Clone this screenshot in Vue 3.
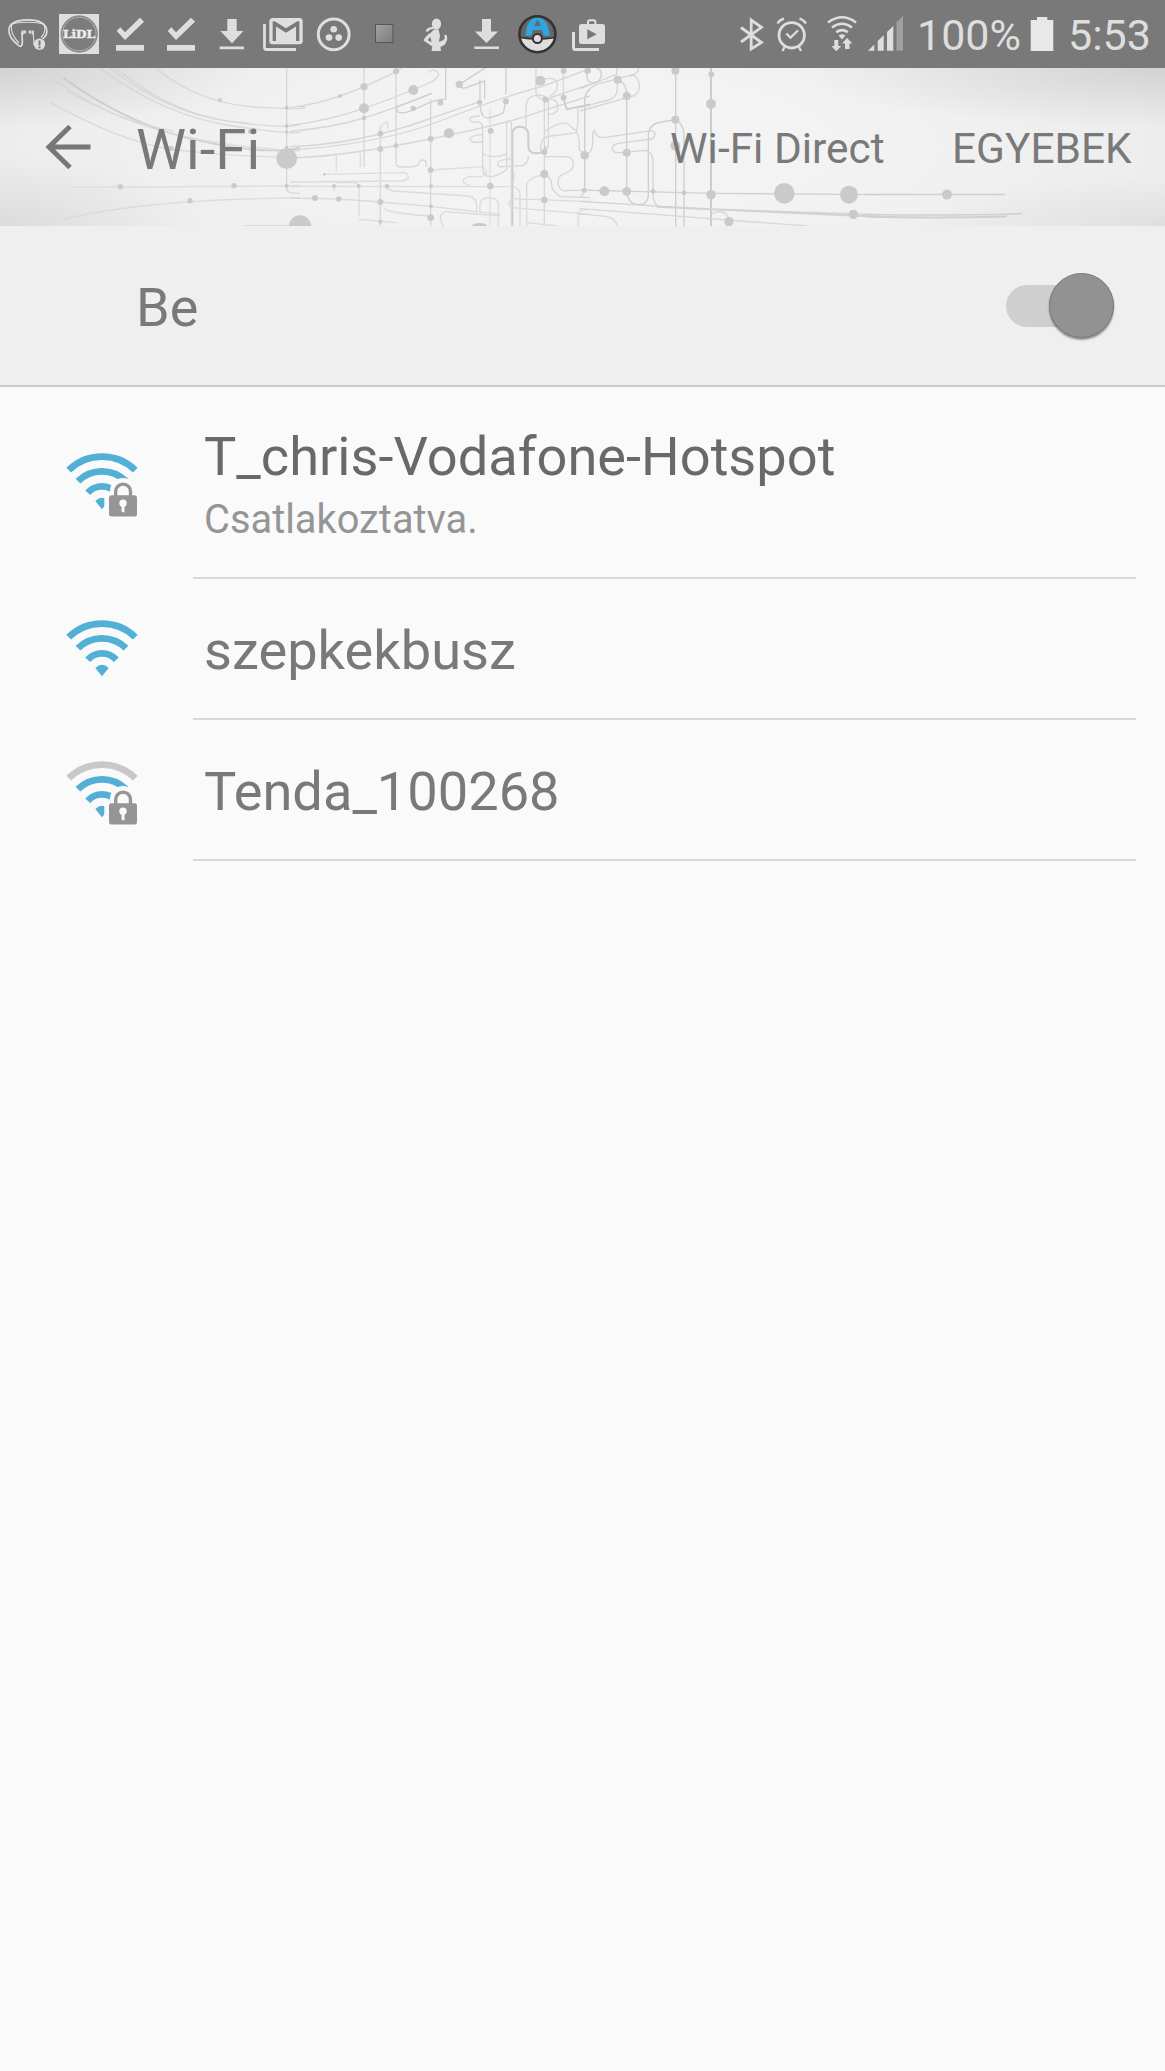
<script setup>
const networks = [
  { name: 'T_chris-Vodafone-Hotspot', status: 'Csatlakoztatva.', secured: true, level: 4 },
  { name: 'szepkekbusz', secured: false, level: 4 },
  { name: 'Tenda_100268', secured: true, level: 3 },
]
</script>

<template>
  <div class="screen">
    <div class="statusbar">
      <div class="notifications">
        <svg width="54" height="68" viewBox="0 0 54 68" fill="none" stroke="#dedede">
          <path d="M14 22.500C20 19 36 19 41 22.500C49 27 48 35 42.500 39M14 22.500C5 27 9 38 17.500 44.500C21 48 22.500 46 22.300 41L22 32" stroke-width="1.700" />
          <path d="M11.500 24.500C17 21.500 38 21.500 44 24.500C46 30 44 34.500 41 37.500M11.500 24.500C10.500 31 14 38 19 43M33.300 33L34 45" stroke-width="1.100" />
          <path d="M22.600 30.500v4M25 30.500v3M29.800 30.500v3M32.600 30.500v4" stroke-width="2.200" />
          <circle cx="39.500" cy="44.300" r="5.700" fill="#dedede" stroke="none" />
          <path d="M39.500 40.500v5M39.500 46.500v2" stroke="#777" stroke-width="2" />
        </svg>
        <svg width="51" height="68" viewBox="54 0 51 68">
          <path d="M59 14h40v40H59z" fill="#dedede" />
          <circle cx="79.200" cy="34" r="18.200" fill="#7c7c7c" stroke="#8a8a8a" stroke-width=".8" />
          <circle cx="79.200" cy="34" r="16.800" fill="none" stroke="#c4c4c4" stroke-width=".7" />
          <text x="63" y="38" class="logo" textLength="32" lengthAdjust="spacingAndGlyphs">LiDL</text>
        </svg>
        <svg v-for="n in 2" :key="n" width="51" height="68" viewBox="105 0 51 68" fill="#dedede">
          <path d="M116.700 31l3.600-3.700 4.700 5 15-14.600 4 4L125 40zM116 45h28v5.700h-28z" />
        </svg>
        <svg width="48" height="68" viewBox="207 0 48 68" fill="#dedede">
          <path d="M227.300 19h9.400v12h6.800L232 43.300 220.300 31h7zM219.700 46.600H244v2.600h-24.300z" />
        </svg>
        <svg width="53" height="68" viewBox="255 0 53 68">
          <path d="M264.500 24v23.500q0 2 2 2H296" fill="none" stroke="#dedede" stroke-width="2.800" />
          <path transform="translate(265.960 11.440) scale(1.670 1.640)" d="M20 18h-2V9.250L12 13 6 9.250V18H4V6h1.200l6.800 4.250L18.800 6H20m0-2H4c-1.110 0-2 .89-2 2v12a2 2 0 0 0 2 2h16a2 2 0 0 0 2-2V6a2 2 0 0 0-2-2z" fill="#dedede" />
        </svg>
        <svg width="52" height="68" viewBox="308 0 52 68" fill="#dedede">
          <circle cx="333.700" cy="34.300" r="15.400" fill="none" stroke="#dedede" stroke-width="3" />
          <circle cx="333.700" cy="29.300" r="3.300" /><circle cx="329" cy="37.600" r="3.300" /><circle cx="338.700" cy="37.600" r="3.300" />
        </svg>
        <svg width="50" height="68" viewBox="360 0 50 68">
          <defs><linearGradient id="stop" x2="1" y2="1"><stop stop-color="#a2a2a2" /><stop offset="1" stop-color="#7d7d7d" /></linearGradient></defs>
          <rect x="375.500" y="24.500" width="17.500" height="18" fill="url(#stop)" stroke="#555" />
        </svg>
        <svg width="50" height="68" viewBox="410 0 50 68" fill="#dedede">
          <ellipse cx="436.500" cy="24" rx="4.600" ry="5.600" />
          <path d="M425.500 31q2-4.500 8-4v2q-4 0-6 3zM430.500 33l3.500-3.500h4.500l1.500 6-1 6.500 4.500-2 1.500-2.500-1-2q2-1.500 3 .5l.2 3.500-2.200 5-4.500 2.500.5 4h-9.500l.8-4.500-8.800-6q2-5 7-7.500zM430.500 37l-3 3 4 2.300z" fill-rule="evenodd" />
        </svg>
        <svg width="52" height="68" viewBox="460 0 52 68" fill="#dedede">
          <path d="M482 19h9v12.500h7L486.500 43 475 31.500h7zM474.300 46.500H499v2.600h-24.700z" />
        </svg>
        <svg width="51" height="68" viewBox="512 0 51 68">
          <circle cx="537.400" cy="34.200" r="18" fill="#666" />
          <path d="M520 37.500q17.500 3 35 0A18 18 0 0 1 520 37.500z" fill="#dedede" />
          <path d="M525.500 36C526 25 530 17.500 537.500 17.500S549 25 549.700 36L543.500 35.500 542 30H533l-1.500 5.500z" fill="#30a4e0" />
          <path d="M537.500 19.500l3.500 6.500h-7z" fill="#666" />
          <circle cx="537.400" cy="34.200" r="18" fill="none" stroke="#333" stroke-width="2.600" />
          <path d="M520 37.500q17.500 3 35 0" fill="none" stroke="#333" stroke-width="1.500" />
          <circle cx="537.400" cy="38.500" r="4.500" fill="#dedede" stroke="#333" stroke-width="2" />
        </svg>
        <svg width="52" height="68" viewBox="563 0 52 68">
          <path d="M573.500 32v15.500q0 2 2 2H599" fill="none" stroke="#dedede" stroke-width="3" />
          <path d="M588 24v-2q0-1.700 1.700-1.700h4q1.700 0 1.700 1.700v2" fill="none" stroke="#dedede" stroke-width="2" />
          <rect x="579" y="24" width="26" height="20" rx="2.500" fill="#dedede" />
          <path d="M587.300 29.300v10l9.400-5z" fill="#777" />
        </svg>
      </div>

      <div class="system">
        <svg width="35" height="68" viewBox="735 0 35 68" fill="none" stroke="#dedede" stroke-width="2.800">
          <path d="M741 27.500l20.500 15L751.200 49V20l10.300 7.300-20.500 14.700" />
        </svg>
        <svg width="45" height="68" viewBox="770 0 45 68" fill="none" stroke="#dedede" stroke-width="2.800">
          <circle cx="791.700" cy="35.300" r="12.700" />
          <path d="M786.300 33.500l4.200 4.200 7.500-7.200M777.500 23.500q2-3.500 6.500-4.800M799.500 18.700q4 1 6.500 4.800M784.500 47l-2 4M799 47l2 4" stroke-width="2.300" />
        </svg>
        <svg width="47" height="68" viewBox="815 0 47 68" fill="none" stroke="#dedede" stroke-width="2.600">
          <path d="M828 22.500q14-10.500 28 0M832 27.500q10-7.500 20 0M836.200 32.300q5.800-4.300 11.600 0" />
          <path d="M838.600 35.600q3.400-2.500 6.800 0l-3.400 4zM834.300 40h4v6h3l-5 5.300-5-5.300h3zM845 49v-5.500h-3l5-5.500 5.500 5.500h-3V49z" fill="#dedede" stroke="none" />
        </svg>
        <svg width="50" height="68" viewBox="862 0 50 68" fill="#dedede">
          <path d="M868 50.700l6.300-6.300v6.300zM877.700 50.700v-9.700l6-5.700v15.400zM887 50.700V32l6.300-6v24.700z" />
          <path d="M896.500 50.700V22.500l6.500-6.500v34.700z" fill="#a0a0a0" />
        </svg>
        <span class="percent">100%</span>
        <svg width="34" height="68" viewBox="1027 0 34 68" fill="#e8e8e8">
          <path d="M1030.700 20h6.300v-3h10.300v3h6v31h-22.600z" />
        </svg>
        <span class="clock">5:53</span>
      </div>
    </div>

    <header class="appbar">
      <svg class="pattern" width="1165" height="158" viewBox="0 68 1165 158" fill="none" stroke="#cecece">
        <!-- left third -->
        <g transform="translate(0 66) scale(.33333)" stroke-width="4" opacity=".75">
          <path d="M190 36Q390 180 600 225T900 244" stroke="#c4c4c4" stroke-width="5" />
          <path d="M163 43C300 130 450 230 900 255M200 75Q360 165 520 195M152 110Q360 225 500 247T900 275" stroke="#d4d4d4" />
          <path d="M300 6Q490 150 700 180T900 196M330 6Q500 140 680 165T900 176M347 6Q530 160 750 172M470 8Q600 115 780 124T900 120" stroke="#d2d2d2" />
          <path d="M860 0V370q3 14 40 12" />
          <path d="M222 364L900 360M185 462Q420 400 900 396M730 479H900" stroke="#d8d8d8" />
        </g>
        <g transform="translate(0 66) scale(.33333)" fill="#cacaca" stroke="none">
          <circle cx="860" cy="278" r="31" /><circle cx="900" cy="482" r="34" />
          <circle cx="660" cy="102" r="6" /><circle cx="860" cy="125" r="6" /><circle cx="860" cy="180" r="6" /><circle cx="860" cy="198" r="5" /><circle cx="860" cy="245" r="6" />
          <circle cx="361" cy="362" r="8" /><circle cx="702" cy="359" r="8" /><circle cx="860" cy="360" r="6" /><circle cx="570" cy="404" r="8" /><circle cx="513" cy="247" r="8" /><circle cx="750" cy="197" r="7" />
        </g>
        <!-- middle third -->
        <g transform="translate(290 66) scale(.33333)" stroke-width="4" opacity=".75">
          <path d="M0 124Q100 115 222 62T330 6M0 178Q110 165 222 127T430 45Q455 25 440 16T415 20M0 196Q130 185 222 156T425 82" />
          <path d="M0 242Q200 235 400 165T570 108M0 252Q270 235 450 165T760 60L900 8M20 275Q170 270 420 219T740 140L900 90M760 102L900 55" />
          <path d="M222 0V303M271 180V480M318 0V290Q318 303 335 303H360Q385 303 388 290T408 285V303M422 100V480M763 90V480M820 0V95M884 100V370M885 100Q885 80 900 70" />
          <path d="M600 130V480" stroke="#dadada" />
          <path d="M667 480V205Q667 182 690 182T715 205V240Q715 262 740 262T767 240" stroke="#bfbfbf" stroke-width="6" />
          <path d="M467 6V100H450Q425 105 380 127Q330 150 322 135T350 112L425 82M508 55L585 6M508 55Q515 75 540 60L584 45V100M570 42V108Q570 135 580 150T640 140L648 106M648 0V85" stroke="#c2c2c2" />
          <path d="M570 150Q540 150 540 160T560 168Q578 165 578 190V310Q580 330 600 332T650 310V170Q655 160 664 170V480M578 205Q540 208 540 220T578 228M578 262Q590 272 610 272T650 265M667 278Q625 280 623 292T640 302L700 298Q715 290 715 270" />
          <path d="M708 190V120Q710 90 740 88T775 105V240Q770 260 750 262M738 6V80Q740 100 766 101M760 40Q800 30 802 55T780 90M770 100Q800 95 803 120T775 145M766 195Q820 160 835 175T860 195L864 170V125M752 260V240Q755 212 780 210T860 200Q868 205 868 250L884 268M763 272H830Q850 275 850 295T825 322Q800 330 805 355T835 373H884M763 323Q785 335 785 355T810 392L900 395" />
          <path d="M820 95L830 130 900 115" stroke="#bfbfbf" stroke-width="5" />
          <path d="M100 325L340 320Q355 322 355 332T335 345L0 348M0 361L660 362Q675 350 672 315M139 317V265M211 303V262M132 378V360M135 350H195Q207 350 207 370V450M293 190V170Q285 165 271 185M422 312L580 302Q600 325 575 332H540Q520 335 520 345T540 358" stroke="#d6d6d6" />
          <path d="M0 396L145 399 271 408 422 421 630 445M285 425Q280 440 420 450M291 361Q290 370 310 375L535 390Q560 395 560 420V440M570 440V415Q572 395 598 395T625 415V480M460 480Q440 450 465 437L630 450M710 480V355Q715 335 763 325M667 362Q690 365 690 385V480M667 425Q645 410 672 398L900 407M667 425L900 445M710 470L800 480M865 480V440Q868 430 900 430M207 460L320 470" stroke="#d4d4d4" />
        </g>
        <g transform="translate(290 66) scale(.33333)" fill="#cacaca" stroke="none">
          <circle cx="222" cy="62" r="11" /><circle cx="222" cy="127" r="15" /><circle cx="222" cy="156" r="7" /><circle cx="150" cy="90" r="6" /><circle cx="318" cy="16" r="9" /><circle cx="370" cy="72" r="15" /><circle cx="370" cy="127" r="8" /><circle cx="451" cy="110" r="9" />
          <circle cx="508" cy="55" r="11" /><circle cx="569" cy="109" r="8" /><circle cx="648" cy="106" r="9" /><circle cx="751" cy="44" r="15" /><circle cx="766" cy="101" r="9" /><circle cx="821" cy="95" r="9" /><circle cx="821" cy="14" r="9" /><circle cx="894" cy="14" r="9" />
          <circle cx="271" cy="203" r="9" /><circle cx="271" cy="249" r="9" /><circle cx="318" cy="239" r="7" /><circle cx="422" cy="219" r="9" /><circle cx="477" cy="202" r="15" /><circle cx="602" cy="195" r="9" /><circle cx="422" cy="312" r="9" /><circle cx="763" cy="258" r="9" /><circle cx="884" cy="268" r="12" /><circle cx="763" cy="324" r="12" /><circle cx="763" cy="402" r="10" /><circle cx="883" cy="373" r="7" />
          <circle cx="132" cy="360" r="6" /><circle cx="206" cy="360" r="6" /><circle cx="291" cy="361" r="7" /><circle cx="423" cy="360" r="6" /><circle cx="601" cy="360" r="10" /><circle cx="75" cy="396" r="9" /><circle cx="146" cy="399" r="8" /><circle cx="271" cy="408" r="9" /><circle cx="423" cy="421" r="6" /><circle cx="422" cy="455" r="10" /><circle cx="271" cy="467" r="6" /><ellipse cx="568" cy="482" rx="24" ry="11" /><circle cx="103" cy="325" r="4" />
        </g>
        <!-- right third -->
        <g transform="translate(580 66) scale(.33333)" stroke-width="4">
          <path d="M14 360V95Q20 70 50 55L160 25Q178 18 175 6M0 68L110 25V6M0 125L85 102Q115 95 112 60V40M0 135L165 88Q185 70 175 45T150 32" opacity=".8" />
          <path d="M22 14Q15 45 35 50T64 30Q65 10 50 6M113 41Q140 50 140 90V376Q145 415 175 416T205 385V205Q208 172 245 168L286 161Q312 175 312 210V480M287 0V480" />
          <path d="M14 268Q38 260 38 230V205Q42 185 46 200T70 215L200 196Q226 190 225 205T205 220L115 232Q97 235 97 248T120 260L195 253Q219 255 219 290V380Q218 415 240 424" stroke="#d4d4d4" />
          <path d="M393 0V480" stroke="#c4c4c4" stroke-width="5" />
          <path d="M0 372L394 382L900 386M0 406L390 430L900 446" stroke="#d2d2d2" /><path d="M230 422L900 452" stroke="#d2d2d2" stroke-width="6" />
          <path d="M0 428L680 480M0 443L80 452Q105 455 112 480M394 445Q405 435 425 438T447 467M0 390Q14 385 12 373" stroke="#d8d8d8" />
        </g>
        <g transform="translate(580 66) scale(.33333)" fill="#cacaca" stroke="none">
          <circle cx="22" cy="14" r="9" /><circle cx="286" cy="14" r="12" /><circle cx="394" cy="25" r="9" /><circle cx="113" cy="41" r="12" /><circle cx="140" cy="90" r="12" /><circle cx="393" cy="114" r="15" /><circle cx="286" cy="161" r="12" /><circle cx="286" cy="239" r="15" /><circle cx="14" cy="268" r="12" /><circle cx="140" cy="260" r="12" />
          <circle cx="12" cy="373" r="7" /><circle cx="73" cy="376" r="15" /><circle cx="140" cy="376" r="13" /><circle cx="219" cy="376" r="7" /><circle cx="312" cy="380" r="7" /><circle cx="393" cy="386" r="14" /><circle cx="613" cy="382" r="31" /><circle cx="807" cy="386" r="27" /><circle cx="820" cy="445" r="14" /><circle cx="447" cy="467" r="14" />
        </g>
        <g stroke="#cfcfcf" stroke-width="1.500">
          <path d="M865 194.500H1005M865 214.500Q950 216 1022 213.500" /><path d="M865 216.500Q930 218.500 1007 216.500" stroke-width="2" />
          <circle cx="947" cy="194.600" r="5" fill="#cacaca" stroke="none" />
        </g>
      </svg>
      <svg class="back" width="46" height="46" viewBox="0 0 46 46" fill="none" stroke="#777" stroke-width="5">
        <path d="M45.500 23H4M25 2.500L4 23l21 20.500" />
      </svg>
      <h1>Wi-Fi</h1>
      <span class="action direct">Wi-Fi Direct</span>
      <span class="action">EGYEBEK</span>
    </header>

    <div class="master">
      <span>Be</span>
      <div class="switch"><div class="thumb"></div></div>
    </div>

    <main>
      <div v-for="net in networks" :key="net.name" class="network" :class="{ connected: net.status }">
        <svg class="signal" width="74" height="68" viewBox="-37 -58 74 68">
          <g fill="none" stroke="#52afd5" stroke-width="6.700">
            <path d="M-33.300-39.800A47.800 47.800 0 0 1 33.300-39.800" :stroke="net.level < 4 ? '#c8c8c8' : '#52afd5'" />
            <path d="M-24-28.800A34 34 0 0 1 24-28.800M-14.300-17.300A19.200 19.200 0 0 1 14.300-17.300" />
          </g>
          <path d="M-6.700-9Q0-15.500 6.700-9L0-.7z" fill="#52afd5" />
          <g v-if="net.secured">
            <path d="M2.300 9V-15L8-18.500V-19a13 13 0 0 1 26 0V9z" fill="#fafafa" />
            <path d="M13.700-14V-18.500a7.400 7.400 0 0 1 14.800 0V-14" fill="none" stroke="#959595" stroke-width="3.300" />
            <rect x="7" y="-14.700" width="28" height="21.300" rx="2.500" fill="#959595" />
            <circle cx="21" cy="-6.700" r="3.700" fill="#fafafa" />
            <path d="M19.600-6h2.900V2.200h-2.900z" fill="#fafafa" />
          </g>
        </svg>
        <div class="label">
          <div class="name">{{ net.name }}</div>
          <div v-if="net.status" class="state">{{ net.status }}</div>
        </div>
      </div>
    </main>
  </div>
</template>

<style>
body {
  background: #fafafa;
}
</style>

<style scoped>
.screen {
  width: 1165px;
  height: 2071px;
  overflow: hidden;
  background: #fafafa;
  font-family: Roboto, sans-serif;
  color: #797979;
}
svg {
  display: block;
  flex: none;
}
.statusbar {
  display: flex;
  justify-content: space-between;
  height: 68px;
  background: #797979;
}
.notifications,
.system {
  display: flex;
}
.logo {
  font: bold 11px 'DejaVu Serif', serif;
  fill: #ececec;
  stroke: #ececec;
  stroke-width: 0.5px;
}
.system {
  width: 430px;
  font-size: 43px;
  line-height: 68px;
  color: #dedede;
}
.percent {
  width: 115px;
  padding-left: 5px;
  box-sizing: border-box;
  margin-top: 1px;
}
.clock {
  padding-left: 7px;
  margin-top: 1px;
}
.appbar {
  position: relative;
  display: flex;
  height: 158px;
  background:
    radial-gradient(ellipse 260px 60px at 0 0, #0000001c, transparent),
    radial-gradient(ellipse 200px 70px at 0 100%, #00000012, transparent),
    radial-gradient(ellipse 380px 60px at 100% 0, #0000001c, transparent),
    radial-gradient(ellipse 260px 50px at 100% 100%, #0000000e, transparent),
    radial-gradient(ellipse 750px 220px at 50% 50%, #f3f3f3 30%, #eaeaea);
}
.pattern {
  position: absolute;
  inset: 0;
}
.back {
  position: relative;
  margin: 56px 0 0 45px;
}
h1 {
  position: relative;
  width: 535px;
  margin: 49px 0 0 45px;
  font-size: 56.400px;
  font-weight: 400;
  line-height: 66px;
}
.action {
  position: relative;
  margin-top: 51px;
  font-size: 42.400px;
  line-height: 60px;
  white-space: nowrap;
}
.direct {
  width: 282px;
  margin-left: -1px;
}
.master {
  display: flex;
  justify-content: space-between;
  box-sizing: border-box;
  height: 161px;
  padding: 51px 51px 0 136px;
  border-bottom: 2px solid #cacaca;
  background: #efefef;
  font-size: 54px;
  line-height: 62px;
}
.switch {
  display: flex;
  align-items: center;
  justify-content: flex-end;
  width: 108px;
  height: 42px;
  margin-top: 8px;
  border-radius: 21px;
  background: #cfcfcf;
}
.thumb {
  flex: none;
  box-sizing: border-box;
  width: 65px;
  height: 65px;
  margin-top: -1px;
  border: 1.500px solid #7a7a7a;
  border-radius: 50%;
  background: #929292;
  box-shadow: 0 2px 2px #0006;
}
.network {
  position: relative;
  display: flex;
  box-sizing: border-box;
  height: 141px;
  padding: 40px 0 0 65px;
}
.network::after {
  content: '';
  position: absolute;
  right: 29px;
  bottom: 0;
  left: 193px;
  height: 2px;
  background: #d8d8d8;
}
.network.connected {
  height: 192px;
  padding-top: 38px;
}
.connected .signal {
  margin-top: 27px;
}
.label {
  padding-left: 65px;
}
.name {
  font-size: 54.200px;
  line-height: 64px;
}
.connected .name {
  color: #696969;
}
.state {
  margin-top: 1px;
  font-size: 39.850px;
  line-height: 60px;
  color: #959595;
}
</style>
